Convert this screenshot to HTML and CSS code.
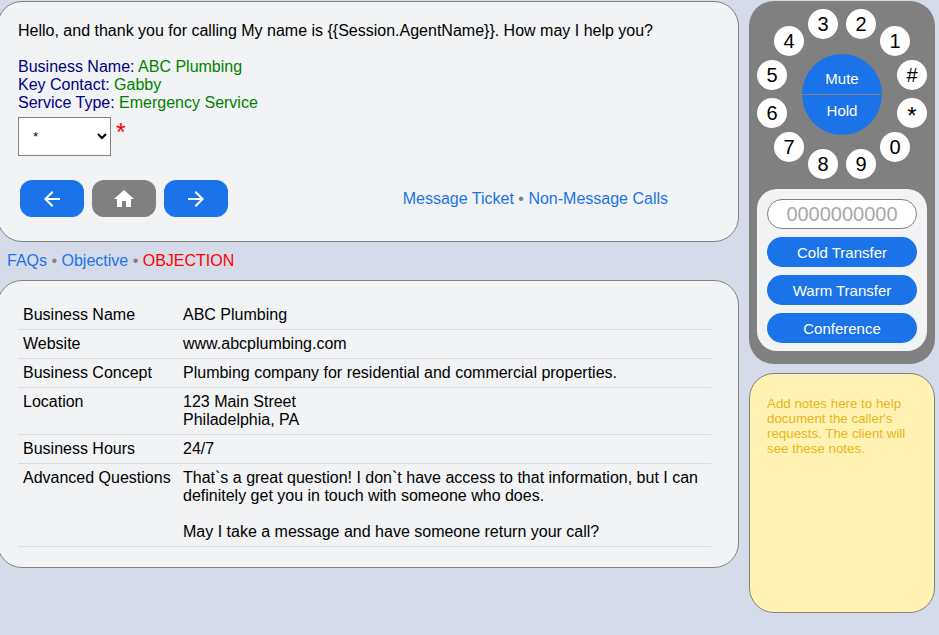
FILE: index.html
```html
<!DOCTYPE html>
<html lang="en">
<head>
    <meta charset="UTF-8">
    <meta name="viewport" content="width=device-width, initial-scale=1.0">
    <title>Agent Script</title>
    <link rel="stylesheet" href="styles.css">
</head>
<body>

<div class="page">
    <main class="main">
        <section class="panel">
            <p class="greeting">Hello, and thank you for calling My name is {{Session.AgentName}}. How may I help you?</p>
            <p class="field">Business Name: <span class="value">ABC Plumbing</span></p>
            <p class="field">Key Contact: <span class="value">Gabby</span></p>
            <p class="field">Service Type: <span class="value">Emergency Service</span></p>

            <div class="choice">
                <select class="choice-select" id="choice" aria-label="Call type">
                    <option>*</option>
                </select>
                <label class="required" for="choice">*</label>
            </div>

            <div class="actions">
                <div class="nav-buttons">
                    <button class="nav-button" type="button" aria-label="Back">
                        <svg width="24" height="24" viewBox="0 0 24 24"><path d="M20 11H7.83l5.59-5.59L12 4l-8 8 8 8 1.41-1.41L7.83 13H20v-2z"/></svg>
                    </button>
                    <button class="nav-button home" type="button" aria-label="Home">
                        <svg width="24" height="24" viewBox="0 0 24 24"><path d="M10 20v-6h4v6h5v-8h3L12 3 2 12h3v8z"/></svg>
                    </button>
                    <button class="nav-button" type="button" aria-label="Next">
                        <svg width="24" height="24" viewBox="0 0 24 24"><path d="M12 4l-1.41 1.41L16.17 11H4v2h12.17l-5.58 5.59L12 20l8-8z"/></svg>
                    </button>
                </div>
                <div class="links">
                    <a href="#">Message Ticket</a> • <a href="#">Non-Message Calls</a>
                </div>
            </div>
        </section>

        <nav class="tabs">
            <a href="#">FAQs</a> • <a href="#">Objective</a> • <a class="active" href="#">OBJECTION</a>
        </nav>

        <section class="panel">
            <table class="info">
                <tr><th scope="row">Business Name</th><td>ABC Plumbing</td></tr>
                <tr><th scope="row">Website</th><td>www.abcplumbing.com</td></tr>
                <tr><th scope="row">Business Concept</th><td>Plumbing company for residential and commercial properties.</td></tr>
                <tr><th scope="row">Location</th><td>123 Main Street<br>Philadelphia, PA</td></tr>
                <tr><th scope="row">Business Hours</th><td>24/7</td></tr>
                <tr><th scope="row">Advanced Questions</th><td>That`s a great question! I don`t have access to that information, but I can definitely get you in touch with someone who does.<br><br>May I take a message and have someone return your call?</td></tr>
            </table>
        </section>
    </main>

    <aside class="sidebar">
        <div class="phone">
            <div class="dial">
                <button class="key" type="button">1</button>
                <button class="key" type="button">2</button>
                <button class="key" type="button">3</button>
                <button class="key" type="button">4</button>
                <button class="key" type="button">5</button>
                <button class="key" type="button">6</button>
                <button class="key" type="button">7</button>
                <button class="key" type="button">8</button>
                <button class="key" type="button">9</button>
                <button class="key" type="button">0</button>
                <button class="key star" type="button">*</button>
                <button class="key" type="button">#</button>
                <div class="call">
                    <button class="call-button" type="button">Mute</button>
                    <button class="call-button" type="button">Hold</button>
                </div>
            </div>
            <div class="transfer">
                <input class="number" type="tel" placeholder="0000000000" aria-label="Phone number">
                <button class="transfer-button" type="button">Cold Transfer</button>
                <button class="transfer-button" type="button">Warm Transfer</button>
                <button class="transfer-button" type="button">Conference</button>
            </div>
        </div>
        <textarea class="notes" aria-label="Notes" placeholder="Add notes here to help document the caller's requests. The client will see these notes."></textarea>
    </aside>
</div>

</body>
</html>
```

FILE: styles.css
```css
* {
    box-sizing: border-box;
}

body {
    margin: 0;
    background-color: #d5dbe9;
    color: black;
    font-family: "Liberation Sans", Arial, sans-serif;
    font-size: 16px;
    line-height: 18px;
}

p {
    margin: 0;
}

a {
    color: #1a73e8;
    text-decoration: none;
}

button, input, select, textarea {
    font-family: inherit;
}

button {
    border: none;
    padding: 0;
    cursor: pointer;
}

.page {
    display: grid;
    grid-template-columns: minmax(0, 1fr) 186px;
    gap: 10px;
    padding: 1px 4px 0 0;
}

/* panels run off the left edge of the window */
.panel {
    margin-left: -3px;
    padding: 20px 27px 20px 20px;
    border: 1px solid gray;
    border-radius: 25px;
    background-color: #f1f3f5;
}

.greeting {
    margin-bottom: 18px;
}

.field {
    color: navy;
}

.value {
    color: green;
}

.choice {
    display: flex;
    gap: 5px;
    margin-top: 5px;
}

.choice-select {
    width: 93px;
    height: 39px;
    padding: 0 0 0 10px;
    border: 1px solid gray;
    border-radius: 0;
    background-color: white;
    color: black;
}

.required {
    padding-top: 6px;
    color: red;
    font-size: 25px;
}

.actions {
    display: flex;
    justify-content: space-between;
    align-items: center;
    margin: 24px 43px 4px 2px;
}

.nav-buttons {
    display: flex;
    gap: 8px;
}

.nav-button {
    display: flex;
    justify-content: center;
    align-items: center;
    width: 64px;
    height: 37px;
    border-radius: 12px;
    background-color: #1a73e8;
}

.nav-button svg {
    fill: white;
}

.home {
    background-color: gray;
}

.links, .tabs {
    color: gray;
}

.tabs {
    padding: 10px 7px;
}

.tabs .active {
    color: red;
}

.info {
    width: 100%;
    border-collapse: separate;
    border-spacing: 0;
}

.info th, .info td {
    padding: 5px;
    border-bottom: 1px solid #dadce0;
    text-align: left;
    vertical-align: top;
    font-weight: normal;
}

.info th {
    width: 160px;
    white-space: nowrap;
}

.sidebar {
    display: flex;
    flex-direction: column;
    gap: 9px;
}

.phone {
    padding: 8px 8px 13px;
    border-radius: 25px;
    background-color: gray;
}

/* every key starts in the middle and is moved out onto the ring */
.dial {
    display: grid;
    place-items: center;
    height: 170px;
    margin-bottom: 10px;
}

.dial > * {
    grid-area: 1 / 1;
}

.key {
    width: 30px;
    height: 30px;
    border-radius: 50%;
    background-color: white;
    color: black;
    font-size: 20px;
    line-height: 30px;
}

.star {
    font-size: 24px;
    line-height: 36px;
}

.key:nth-child(1) { transform: translate(53px, -53px); }
.key:nth-child(2) { transform: translate(19px, -70px); }
.key:nth-child(3) { transform: translate(-19px, -70px); }
.key:nth-child(4) { transform: translate(-53px, -53px); }
.key:nth-child(5) { transform: translate(-70px, -19px); }
.key:nth-child(6) { transform: translate(-70px, 19px); }
.key:nth-child(7) { transform: translate(-53px, 53px); }
.key:nth-child(8) { transform: translate(-19px, 70px); }
.key:nth-child(9) { transform: translate(19px, 70px); }
.key:nth-child(10) { transform: translate(53px, 53px); }
.key:nth-child(11) { transform: translate(70px, 19px); }
.key:nth-child(12) { transform: translate(70px, -19px); }

.call {
    display: flex;
    flex-direction: column;
    gap: 1px;
    width: 80px;
    border-radius: 50%;
    overflow: hidden;
}

.call-button {
    height: 40px;
    background-color: #1a73e8;
    color: white;
    font-size: 15px;
}

.call-button:first-child {
    padding-top: 9px;
}

.call-button:last-child {
    padding-bottom: 8px;
}

.transfer {
    display: flex;
    flex-direction: column;
    gap: 8px;
    padding: 10px 10px 8px;
    border-radius: 20px;
    background-color: #f1f3f5;
}

.number {
    width: 100%;
    height: 30px;
    padding: 0;
    border: 1px solid gray;
    border-radius: 15px;
    background-color: white;
    font-size: 20px;
    text-align: center;
}

.number::placeholder {
    color: #a9a9a9;
}

.transfer-button {
    height: 30px;
    border-radius: 15px;
    background-color: #1a73e8;
    color: white;
    font-size: 15px;
}

.notes {
    width: 100%;
    height: 240px;
    padding: 22px 17px;
    border: 1px solid gray;
    border-radius: 25px;
    background-color: #fff2b3;
    line-height: 15px;
    resize: none;
}

.notes::placeholder {
    color: #e8b71a;
}
```
